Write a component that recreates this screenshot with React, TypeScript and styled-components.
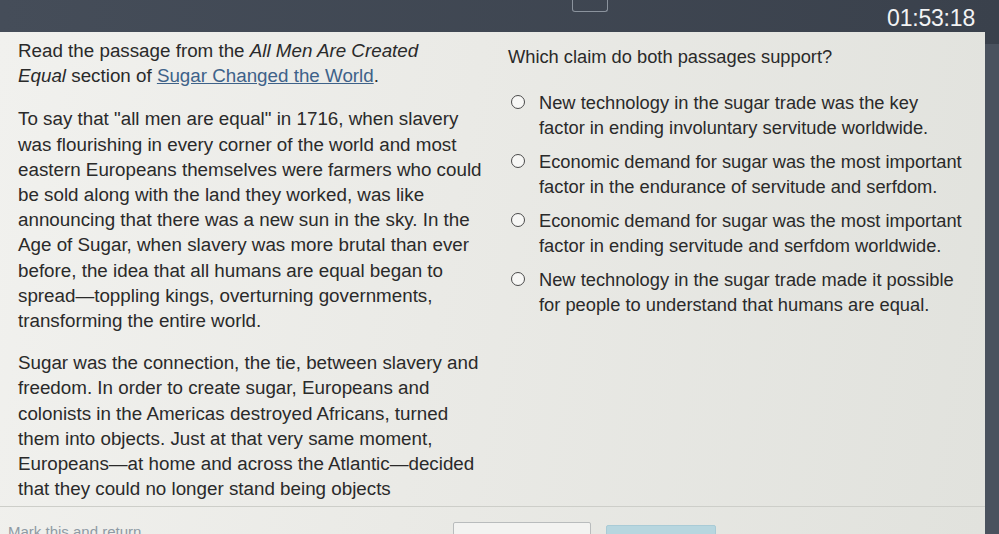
import * as React from "react";
import styled, { createGlobalStyle } from "styled-components";

const ink = "#2a2a2a";

const GlobalStyle = createGlobalStyle`
  html, body {
    margin: 0;
    padding: 0;
  }
  body {
    background: #3d4551;
    font-family: "Liberation Sans", Arial, sans-serif;
    overflow: hidden;
  }
`;

const Screen = styled.div`
  width: 999px;
  height: 534px;
  display: flex;
  flex-direction: column;
  background: linear-gradient(90deg, #454d59, #3a414c);
  overflow: hidden;
`;

const TopBar = styled.header`
  height: 32px;
  flex: none;
  display: flex;
  align-items: flex-start;
  justify-content: space-between;
  padding: 0 24px 0 572px;
  box-sizing: border-box;
`;

const ReviewTab = styled.div`
  width: 34px;
  height: 11px;
  border: 1.5px solid #8b939d;
  border-top: none;
  border-radius: 0 0 3px 3px;
`;

const Timer = styled.div`
  margin-top: 7px;
  font-size: 23px;
  line-height: 1;
  color: #f2f3f4;
  letter-spacing: -0.2px;
`;

const Body = styled.div`
  flex: 1;
  display: flex;
  min-height: 0;
`;

const Panel = styled.main`
  flex: 1;
  display: flex;
  flex-direction: column;
  padding: 6px 0 0 18px;
  background: linear-gradient(100deg, #f1f1ee 0%, #eaeae6 45%, #e1e2dd 100%);
  color: ${ink};
  line-height: 25.2px;
`;

const EdgeStrip = styled.div`
  width: 14px;
  flex: none;
  margin-top: 12px;
  background: #4a525e;
`;

const Columns = styled.div`
  display: grid;
  grid-template-columns: 466px 1fr;
  column-gap: 24px;
`;

const PassageColumn = styled.section`
  display: flex;
  flex-direction: column;
  gap: 17px;
  font-size: 18.8px;
`;

const Prompt = styled.p`
  margin: 0 0 1px;
  max-width: 430px;
`;

const SourceLink = styled.a`
  color: #3e6289;
  text-decoration: underline;
`;

const Paragraph = styled.p`
  margin: 0;
`;

const QuestionColumn = styled.section`
  padding-top: 6px;
  display: flex;
  flex-direction: column;
  gap: 21px;
  font-size: 18.3px;
`;

const Question = styled.p`
  margin: 0;
`;

const Options = styled.div`
  display: flex;
  flex-direction: column;
  gap: 8.6px;
`;

const Option = styled.label`
  display: flex;
  align-items: flex-start;
  gap: 14px;
  padding-left: 3px;
  cursor: pointer;
`;

const Radio = styled.span`
  flex: none;
  width: 12px;
  height: 12px;
  margin-top: 5px;
  border: 1.6px solid #4a4a4a;
  border-radius: 50%;
  background: #f7f7f5;
`;

const OptionText = styled.span`
  width: 427px;
`;

const Footer = styled.footer`
  margin-top: 5px;
  margin-left: -18px;
  border-top: 1px solid #cdcec9;
  padding: 15px 0 0 8px;
  display: flex;
  align-items: flex-start;
`;

const FooterNote = styled.span`
  width: 445px;
  font-size: 15px;
  line-height: 20px;
  color: #8e9aa4;
`;

const Button = styled.div<{ $primary?: boolean }>`
  width: ${(p) => (p.$primary ? "110px" : "138px")};
  height: 30px;
  margin-top: ${(p) => (p.$primary ? "3px" : "0")};
  margin-right: 15px;
  box-sizing: border-box;
  border: 1px solid ${(p) => (p.$primary ? "#a9cbd6" : "#b9bcbd")};
  border-radius: 2px;
  background: ${(p) => (p.$primary ? "#b7d6df" : "#f3f3f1")};
`;

const options = [
  "New technology in the sugar trade was the key factor in ending involuntary servitude worldwide.",
  "Economic demand for sugar was the most important factor in the endurance of servitude and serfdom.",
  "Economic demand for sugar was the most important factor in ending servitude and serfdom worldwide.",
  "New technology in the sugar trade made it possible for people to understand that humans are equal.",
];

const App: React.FC = () => (
  <>
    <GlobalStyle />
    <Screen>
      <TopBar>
        <ReviewTab />
        <Timer>01:53:18</Timer>
      </TopBar>
      <Body>
        <Panel>
          <Columns>
            <PassageColumn>
              <Prompt>
                Read the passage from the <i>All Men Are Created Equal</i>{" "}
                section of <SourceLink>Sugar Changed the World</SourceLink>.
              </Prompt>
              <Paragraph>
                To say that "all men are equal" in 1716, when slavery was
                flourishing in every corner of the world and most eastern
                Europeans themselves were farmers who could be sold along with
                the land they worked, was like announcing that there was a new
                sun in the sky. In the Age of Sugar, when slavery was more
                brutal than ever before, the idea that all humans are equal
                began to spread—toppling kings, overturning governments,
                transforming the entire world.
              </Paragraph>
              <Paragraph>
                Sugar was the connection, the tie, between slavery and freedom.
                In order to create sugar, Europeans and colonists in the
                Americas destroyed Africans, turned them into objects. Just at
                that very same moment, Europeans—at home and across the
                Atlantic—decided that they could no longer stand being objects
              </Paragraph>
            </PassageColumn>
            <QuestionColumn>
              <Question>Which claim do both passages support?</Question>
              <Options>
                {options.map((o) => (
                  <Option key={o}>
                    <Radio />
                    <OptionText>{o}</OptionText>
                  </Option>
                ))}
              </Options>
            </QuestionColumn>
          </Columns>
          <Footer>
            <FooterNote>Mark this and return</FooterNote>
            <Button />
            <Button $primary />
          </Footer>
        </Panel>
        <EdgeStrip />
      </Body>
    </Screen>
  </>
);

export default App;
